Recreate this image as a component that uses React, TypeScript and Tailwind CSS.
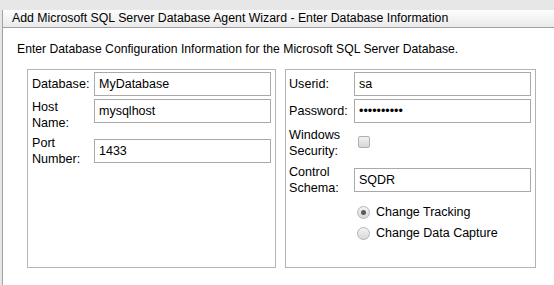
import React from 'react';

function TextBox({ value }: { value: string }) {
  return (
    <div className="w-[177px] h-[24px] shrink-0 border border-[#a9a9a9] bg-white flex items-center px-[4px] text-[12.5px] text-black">
      {value}
    </div>
  );
}

function Row({
  label,
  children,
  labelWidth,
  align = 'items-center',
}: {
  label: React.ReactNode;
  children: React.ReactNode;
  labelWidth: string;
  align?: string;
}) {
  return (
    <div className={`flex ${align}`}>
      <div className={`${labelWidth} shrink-0 leading-[16px] text-[12.6px] text-black`}>{label}</div>
      {children}
    </div>
  );
}

function Radio({ checked, label }: { checked?: boolean; label: string }) {
  return (
    <div className="flex items-center gap-[6px] text-[12.5px] leading-[16px] text-black">
      <span className="w-[13px] h-[13px] rounded-full border border-[#b4b4b4] bg-gradient-to-b from-[#f4f4f4] to-[#d8d8d8] flex items-center justify-center">
        {checked && <span className="w-[5px] h-[5px] rounded-full bg-[#5a5a5a]" />}
      </span>
      {label}
    </div>
  );
}

export default function App(): React.ReactElement {
  return (
    <div className="w-[554px] h-[285px] bg-white overflow-hidden flex flex-col" style={{ fontFamily: '"Liberation Sans", Arial, sans-serif' }}>
      {/* window strip */}
      <div className="h-[10px] bg-[#e7e7e7] shrink-0" />
      <div className="flex flex-1 min-h-0">
        <div className="w-[3px] shrink-0 bg-[#e6e6e6] border-r border-[#a3a3a3]" />
        <div className="flex-1 flex flex-col">
          {/* title */}
          <div className="h-[18px] bg-gradient-to-b from-[#fdfdfd] to-[#eaeaea] border-b border-[#a0a0a0] pl-[9px] text-[12.3px] leading-[17px] text-black">
            Add Microsoft SQL Server Database Agent Wizard - Enter Database Information
          </div>

          <div className="pl-[14px] pt-[13px] text-[12.2px] leading-[16px] text-black">
            Enter Database Configuration Information for the Microsoft SQL Server Database.
          </div>

          <div className="flex gap-[9px] pl-[24px] pt-[12px]">
            {/* left panel */}
            <div className="w-[249px] h-[199px] border border-[#b3b3b3] pl-[4px] pt-[2px] flex flex-col">
              <Row label="Database:" labelWidth="w-[62px]">
                <TextBox value="MyDatabase" />
              </Row>
              <div className="mt-[3px]">
                <Row label={<>Host<br />Name:</>} labelWidth="w-[62px]" align="items-start">
                  <TextBox value="mysqlhost" />
                </Row>
              </div>
              <div className="mt-[4px]">
                <Row label={<>Port<br />Number:</>} labelWidth="w-[62px]">
                  <TextBox value="1433" />
                </Row>
              </div>
            </div>

            {/* right panel */}
            <div className="w-[251px] h-[199px] border border-[#b3b3b3] pl-[3px] pt-[2px] flex flex-col">
              <Row label="Userid:" labelWidth="w-[65px]">
                <TextBox value="sa" />
              </Row>
              <div className="mt-[3px]">
                <Row label="Password:" labelWidth="w-[65px]">
                  <TextBox value="••••••••••" />
                </Row>
              </div>
              <div className="mt-[4px]">
                <Row label={<>Windows<br />Security:</>} labelWidth="w-[69px]">
                  <span className="w-[12px] h-[12px] -mt-[2px] rounded-[2px] border border-[#b0b0b0] bg-gradient-to-b from-[#f2f2f2] to-[#d6d6d6]" />
                </Row>
              </div>
              <div className="mt-[5px]">
                <Row label={<>Control<br />Schema:</>} labelWidth="w-[65px]">
                  <TextBox value="SQDR" />
                </Row>
              </div>
              <div className="pl-[68px] pt-[8px] flex flex-col gap-[5px]">
                <Radio checked label="Change Tracking" />
                <Radio label="Change Data Capture" />
              </div>
            </div>
          </div>
        </div>
      </div>
    </div>
  );
}
